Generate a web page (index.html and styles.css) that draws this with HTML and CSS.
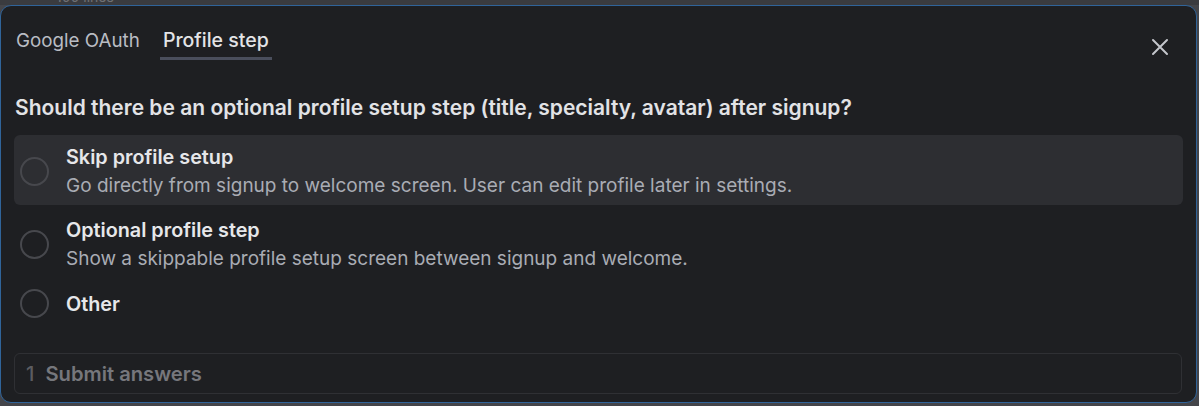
FILE: index.html
```html
<!DOCTYPE html>
<html>
<head>
<meta charset="utf-8">
<link rel="stylesheet" href="styles.css">
</head>
<body>
<div class="strip"><span class="strip-text">100 lines</span></div>
<div class="panel">
  <div class="tabs-row">
    <div class="tabs">
      <div class="tab">Google OAuth</div>
      <div class="tab active">Profile step</div>
    </div>
    <button class="close" aria-label="Close">
      <svg width="18" height="18" viewBox="0 0 18 18"><path d="M2 2 L16 16 M16 2 L2 16" stroke="#c4c6cc" stroke-width="2" stroke-linecap="round" fill="none"/></svg>
    </button>
  </div>
  <div class="question">Should there be an optional profile setup step (title, specialty, avatar) after signup?</div>
  <div class="options">
    <div class="option selected">
      <span class="radio"></span>
      <div class="option-text">
        <div class="option-title">Skip profile setup</div>
        <div class="option-desc">Go directly from signup to welcome screen. User can edit profile later in settings.</div>
      </div>
    </div>
    <div class="option">
      <span class="radio"></span>
      <div class="option-text">
        <div class="option-title">Optional profile step</div>
        <div class="option-desc">Show a skippable profile setup screen between signup and welcome.</div>
      </div>
    </div>
    <div class="option other">
      <span class="radio"></span>
      <div class="option-text">
        <div class="option-title">Other</div>
      </div>
    </div>
  </div>
  <div class="submit">
    <span class="num">1</span>
    <span class="submit-label">Submit answers</span>
  </div>
</div>
</body>
</html>
```

FILE: styles.css
```css
* { box-sizing: border-box; }
html, body {
  margin: 0;
  padding: 0;
}
body {
  width: 1199px;
  height: 406px;
  overflow: hidden;
  background: #44454a;
  font-family: Inter, "Noto Sans", "Liberation Sans", sans-serif;
}
.strip {
  height: 5px;
  overflow: hidden;
  background: #3a3b3f;
  position: relative;
}
.strip-text {
  position: absolute;
  left: 56px;
  top: -11px;
  font-size: 14px;
  line-height: 16px;
  color: #6f7075;
}
.panel {
  width: 1197px;
  height: 398px;
  background: #1e1f22;
  border: 1.5px solid #30649a;
  border-radius: 11px;
  padding: 0 13px 0 13px;
  display: flex;
  flex-direction: column;
}
.tabs-row {
  display: flex;
  align-items: flex-start;
  justify-content: space-between;
  height: 56px;
  padding-top: 21px;
}
.tabs {
  display: flex;
  gap: 17px;
}
.tab {
  font-size: 18.8px;
  line-height: 27px;
  color: #b9bcc3;
  padding: 0 3px 3px 2px;
  border-bottom: 3px solid transparent;
}
.tab.active {
  color: #e3e4e7;
  font-weight: 500;
  font-size: 19.5px;
  border-bottom-color: #4a4e5c;
  padding: 0 3px 3px 3px;
}
.close {
  background: none;
  border: none;
  padding: 0;
  margin: 11px 14px 0 0;
  width: 18px;
  height: 18px;
  display: flex;
}
.question {
  margin-top: 33px;
  padding-left: 1px;
  font-size: 21px;
  line-height: 26px;
  font-weight: 600;
  color: #e2e3e6;
}
.options {
  margin-top: 14px;
  display: flex;
  flex-direction: column;
  gap: 3px;
}
.option {
  display: flex;
  align-items: center;
  gap: 17px;
  padding: 9px 8px 6px 6px;
  border-radius: 6px;
}
.option.selected {
  background: #2d2e32;
}
.option.other {
  padding-top: 8px;
  padding-bottom: 8px;
}
.radio {
  width: 29px;
  height: 29px;
  border-radius: 50%;
  border: 2px solid #47484d;
  flex: none;
}
.option-title {
  font-size: 19.8px;
  line-height: 26px;
  font-weight: 600;
  color: #e6e7ea;
}
.option-desc {
  margin-top: 3px;
  font-size: 19px;
  line-height: 26px;
  color: #a9acb4;
}
.submit {
  margin-top: 27px;
  height: 41px;
  margin-right: 1px;
  border: 1px solid #2f3034;
  border-radius: 6px;
  display: flex;
  align-items: center;
  padding-left: 11px;
  gap: 11px;
  font-size: 20.2px;
  font-weight: 600;
  color: #76777c;
}
.num {
  color: #5b5c61;
  font-weight: 500;
}
```
